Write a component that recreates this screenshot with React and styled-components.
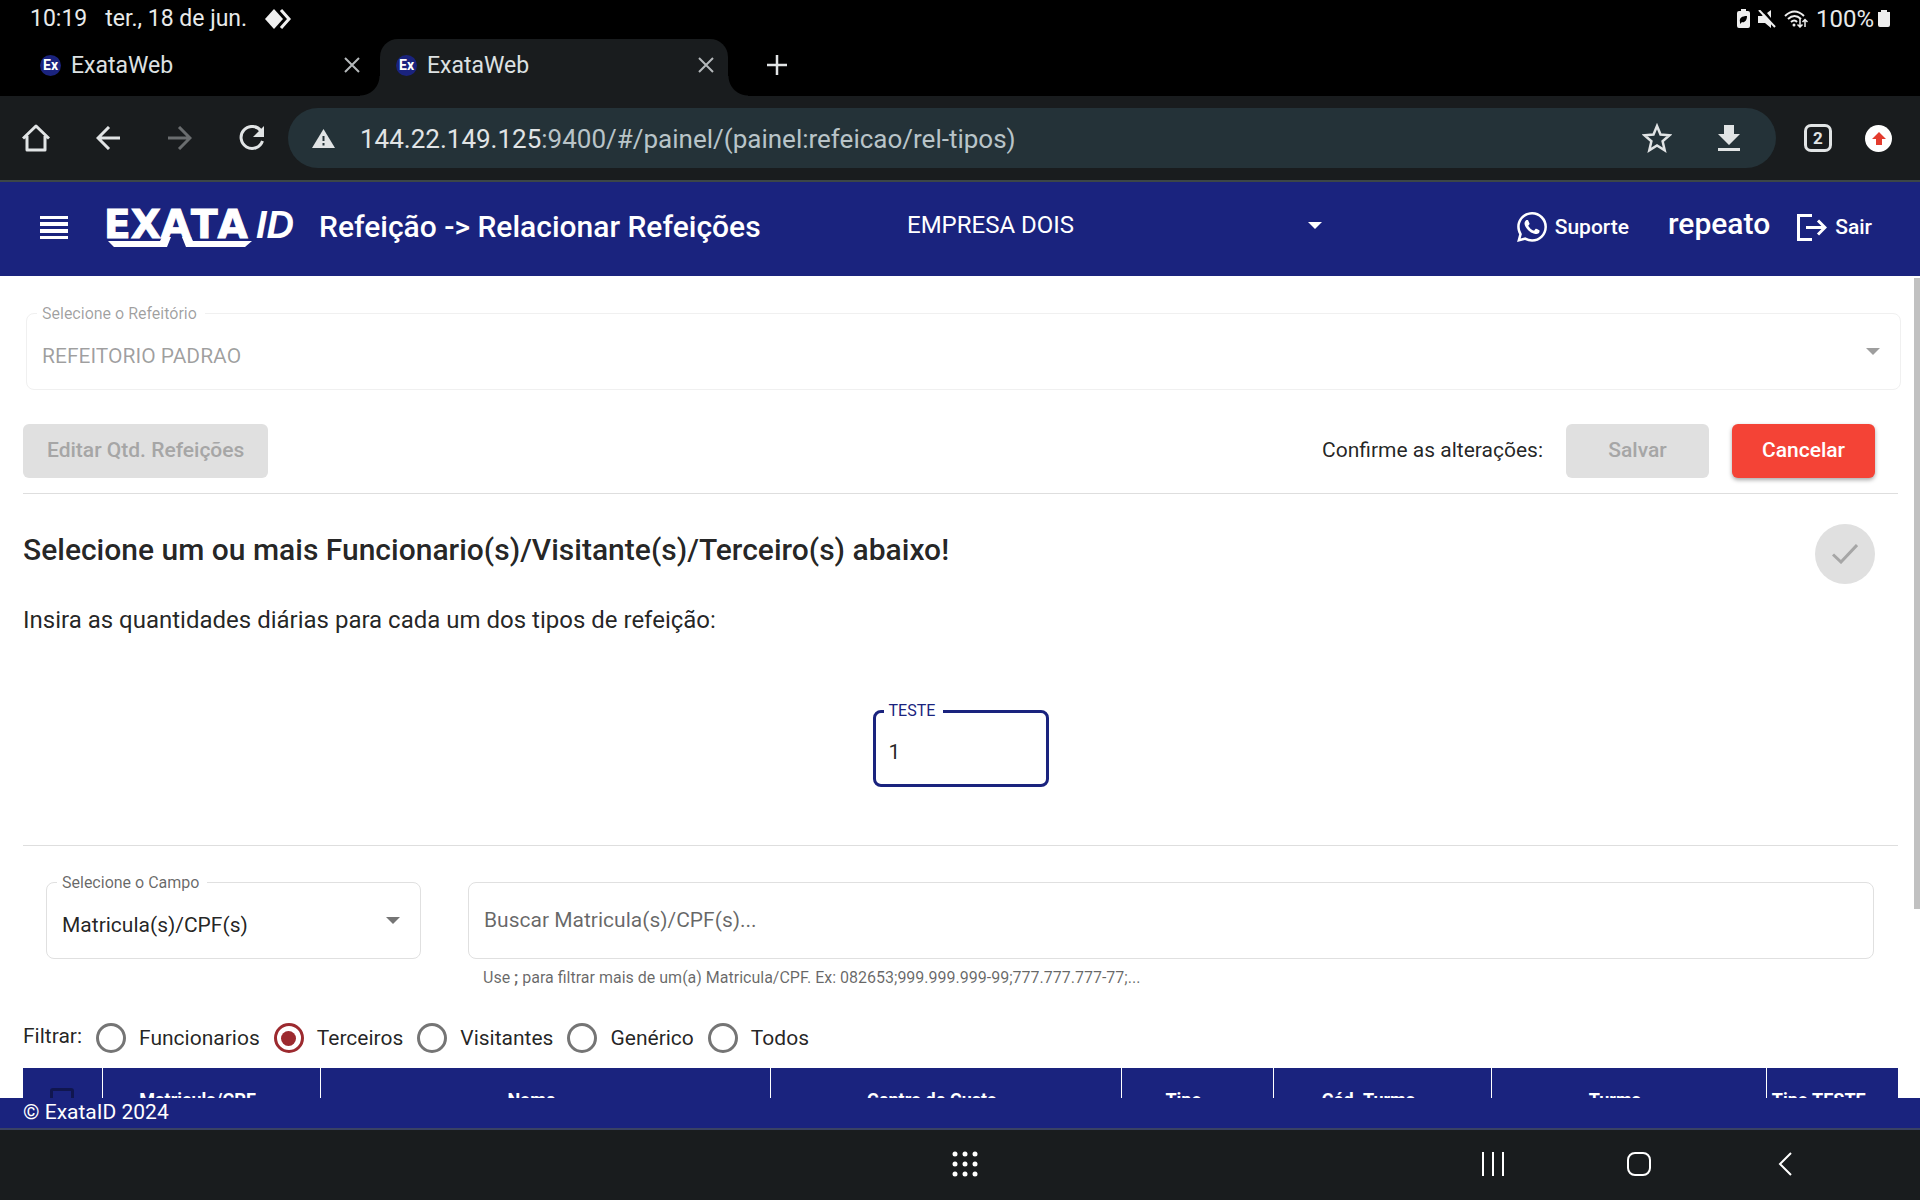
import React, { useState } from "react";
import styled, { createGlobalStyle, css } from "styled-components";

const NAVY = "#1a237e";
const INK = "rgba(0, 0, 0, 0.87)";

const GlobalStyle = createGlobalStyle`
  *, *::before, *::after { box-sizing: border-box; }
  body { margin: 0; font-family: Roboto, "Liberation Sans", sans-serif; color: ${INK}; background: #fff; }
  button, input, select { font: inherit; color: inherit; margin: 0; }
  h1, h2, p { margin: 0; font-weight: 400; }
`;

const Screen = styled.div`
  display: flex;
  flex-direction: column;
  height: 100vh;
  min-height: 600px;
  overflow: hidden;
`;

const Icon = styled.svg`
  display: block;
  flex: none;
  width: ${(p) => p.$w}px;
  height: ${(p) => p.$h || p.$w}px;
`;

const plainButton = css`
  display: flex;
  align-items: center;
  justify-content: center;
  border: 0;
  padding: 0;
  background: none;
`;

/* ---------- Android status bar ---------- */

const StatusBar = styled.div`
  display: flex;
  flex: none;
  align-items: center;
  height: 39px;
  padding: 0 30px 2px;
  background: #000;
  color: #e8eaea;
  font-size: 23px;
  line-height: 36px;
`;
const StatusDate = styled.span`
  margin: 0 18px 0 18px;
`;
const StatusRight = styled.div`
  display: flex;
  align-items: center;
  gap: 8px;
  margin-left: auto;
  font-size: 24px;
`;
const Battery = styled.div`
  display: flex;
  align-items: center;
  gap: 4px;
`;

/* ---------- browser tabs ---------- */

const TabStrip = styled.div`
  display: flex;
  flex: none;
  height: 57px;
  padding-left: 24px;
  background: #000;
`;
const Tab = styled.div`
  position: relative;
  display: flex;
  align-items: center;
  width: ${(p) => (p.$active ? 348 : 356)}px;
  padding: 0 ${(p) => (p.$active ? 10 : 16)}px 5px 16px;
  border-radius: 18px 18px 0 0;
  background: ${(p) => (p.$active ? "#191c1e" : "#000")};
  color: #dde1e2;
  font-size: 23px;

  ${(p) =>
    p.$active &&
    css`
      &::before,
      &::after {
        content: "";
        position: absolute;
        bottom: 0;
        width: 20px;
        height: 20px;
      }
      &::before {
        left: -20px;
        background: radial-gradient(circle at 0 0, #000 19px, #191c1e 20px);
      }
      &::after {
        right: -20px;
        background: radial-gradient(circle at 100% 0, #000 19px, #191c1e 20px);
      }
    `}
`;
const TabTitle = styled.span`
  flex: 1;
  margin-left: 10px;
`;
const Favicon = styled.span`
  display: grid;
  place-items: center;
  width: 21px;
  height: 21px;
  border-radius: 50%;
  background: ${NAVY};
  color: #fff;
  font-size: 14px;
  font-weight: 700;
`;
const IconButton = styled.button`
  ${plainButton}
  flex: none;
  width: ${(p) => p.$w || 24}px;
  height: ${(p) => p.$h || 40}px;
  color: ${(p) => p.$color || "#e1e4e5"};
`;
const NewTab = styled(IconButton)`
  margin: 6px 0 0 37px;
`;

/* ---------- browser toolbar ---------- */

const Toolbar = styled.div`
  display: flex;
  flex: none;
  align-items: center;
  height: 86px;
  padding-right: 28px;
  border-bottom: 2px solid #3c4647;
  background: #191c1e;
`;
const AddressBar = styled.div`
  display: flex;
  flex: 1;
  align-items: center;
  height: 60px;
  padding: 0 24px;
  border-radius: 30px;
  background: #243238;
`;
const Address = styled.p`
  flex: 1;
  margin-left: 25px;
  padding-top: 2px;
  color: #b9c4c8;
  font-size: 26px;
  line-height: 36px;
  white-space: nowrap;
`;
const Host = styled.span`
  color: #e1e4e5;
`;
const TabCount = styled.button`
  ${plainButton}
  width: 28px;
  height: 28px;
  margin: 0 33px 0 28px;
  border: 3px solid #e1e4e5;
  border-radius: 7px;
  color: #e1e4e5;
  font-size: 17px;
  font-weight: 700;
`;
const UpdateButton = styled.button`
  ${plainButton}
  width: 27px;
  height: 27px;
  border-radius: 50%;
  background: #fff;
`;

/* ---------- application header ---------- */

const Header = styled.header`
  display: grid;
  flex: none;
  grid-template-columns: 907px minmax(200px, 415px) 1fr;
  align-items: center;
  height: 94px;
  padding: 0 48px 4px 0;
  background: ${NAVY};
  color: #fff;
`;
const Brand = styled.div`
  display: flex;
  align-items: center;
  padding-left: 39px;
`;
const Logo = styled.svg`
  display: block;
  width: 192px;
  height: 50px;
  margin: 0 20px 0 38px;
  overflow: visible;
  font-kerning: none;
`;
const PageTitle = styled.h1`
  font-size: 30px;
  font-weight: 500;
  line-height: 36px;
`;
const Actions = styled.div`
  display: flex;
  align-items: center;
  justify-content: flex-end;
`;
const ActionLink = styled.a`
  display: flex;
  align-items: center;
  gap: 8px;
  color: inherit;
  font-size: 21px;
  font-weight: 500;
  text-decoration: none;
`;
const UserName = styled.span`
  margin: 0 27px 0 39px;
  padding-bottom: 6px;
  font-size: 30px;
  font-weight: 500;
  line-height: 36px;
`;

/* ---------- form fields ---------- */

const FieldBox = styled.div`
  position: relative;
  display: flex;
  width: ${(p) => p.$width || "100%"};
  height: 77px;
  border: ${(p) => (p.$focused ? `3px solid ${NAVY}` : `1px solid ${p.$disabled ? "#f0f0f0" : "#e0e0e0"}`)};
  border-radius: 8px;
  color: ${(p) => (p.$disabled ? "rgba(0, 0, 0, 0.38)" : INK)};
`;
const FieldLabel = styled.label`
  position: absolute;
  top: ${(p) => (p.$focused ? -12 : -10)}px;
  left: ${(p) => (p.$focused ? 8 : 10)}px;
  padding: 0 8px 0 5px;
  background: #fff;
  color: ${(p) => (p.$focused ? NAVY : p.$disabled ? "rgba(0, 0, 0, 0.38)" : "rgba(0, 0, 0, 0.6)")};
  font-size: 16px;
  line-height: 20px;
`;
const control = css`
  width: 100%;
  border: 0;
  outline: 0;
  background: none;
  appearance: none;
  font-size: 21px;
  opacity: 1;
`;
const FieldInput = styled.input`
  ${control}
  padding: ${(p) => (p.$labelled ? "7px 13px 0" : "0 15px 2px")};

  &::placeholder { color: rgba(0, 0, 0, 0.6); opacity: 1; }
`;
const FieldSelect = styled.select`
  ${control}
  padding: 8px 48px 0 15px;
`;
const CaretBox = styled.span`
  position: absolute;
  top: 34px;
  right: 20px;
  pointer-events: none;
  color: ${(p) => (p.$disabled ? "rgba(0, 0, 0, 0.38)" : "rgba(0, 0, 0, 0.54)")};
`;

const CompanyPicker = styled.div`
  position: relative;
  padding-bottom: 4px;
`;
const CompanySelect = styled.select`
  ${control}
  padding: 0;
  font-size: 24px;
  line-height: 36px;
`;
const CompanyCaret = styled.span`
  position: absolute;
  top: 15px;
  right: 0;
  pointer-events: none;
`;

/* ---------- page ---------- */

const Viewport = styled.div`
  display: flex;
  flex: 1;
  min-height: 0;
`;
const Page = styled.main`
  flex: 1;
  min-width: 0;
  padding: 37px 16px 0 23px;
  overflow: hidden;
`;
const ScrollTrack = styled.div`
  flex: none;
  width: 6px;
  padding-top: 2px;
`;
const ScrollThumb = styled.div`
  height: 77%;
  background: #c1c1c1;
`;
const RefectoryRow = styled.div`
  margin-right: -3px;
  padding-left: 3px;
`;
const Section = styled.section`
  border-bottom: 1px solid #dedede;
`;
const ConfirmBar = styled(Section)`
  display: flex;
  align-items: center;
  gap: 23px;
  padding: 34px 23px 15px 0;
  font-size: 21px;
`;
const ConfirmText = styled.span`
  margin-left: auto;
  padding-bottom: 2px;
`;
const Button = styled.button`
  ${plainButton}
  min-width: 143px;
  height: 54px;
  padding: 0 24px 2px;
  border-radius: 6px;
  background: #e0e0e0;
  color: #a6a6a6;
  font-size: 21px;
  font-weight: 500;

  ${(p) =>
    p.$danger &&
    css`
      background: #f44336;
      color: #fff;
      box-shadow: 0 2px 4px rgba(0, 0, 0, 0.35);
    `}
`;
const Quantities = styled(Section)`
  padding: 30px 0 58px;
`;
const QuantitiesHead = styled.div`
  display: flex;
  align-items: center;
  justify-content: space-between;
  padding-right: 23px;
`;
const Heading = styled.h2`
  padding-bottom: 8px;
  font-size: 30px;
  font-weight: 500;
  line-height: 40px;
`;
const Fab = styled.button`
  ${plainButton}
  width: 60px;
  height: 60px;
  border-radius: 50%;
  background: #e0e0e0;
  color: #a6a6a6;
`;
const Lead = styled.p`
  padding: 20px 0 74px;
  font-size: 24px;
  line-height: 32px;
`;
const Centered = styled.div`
  display: flex;
  justify-content: center;
`;
const Filters = styled.div`
  display: flex;
  gap: 47px;
  padding: 36px 24px 0 23px;
`;
const SearchColumn = styled.div`
  flex: 1;
`;
const Hint = styled.p`
  padding: 9px 15px 0;
  color: rgba(0, 0, 0, 0.6);
  font-size: 16px;
  line-height: 20px;
`;
const RadioRow = styled.fieldset`
  display: flex;
  align-items: center;
  height: 30px;
  margin: 35px 0 15px;
  border: 0;
  padding: 0;
  font-size: 21px;
  line-height: 28px;
`;
const RadioCaption = styled.span`
  margin-right: 14px;
  padding-bottom: 4px;
`;
const RadioLabel = styled.label`
  display: flex;
  align-items: center;
  gap: 13px;
  margin-right: 14px;
`;
const Radio = styled.input`
  display: grid;
  place-items: center;
  width: 30px;
  height: 30px;
  border: 3px solid #757575;
  border-radius: 50%;
  appearance: none;

  &:checked { border-color: #9c2a2f; }
  &:checked::before {
    content: "";
    width: 15px;
    height: 15px;
    border-radius: 50%;
    background: #9c2a2f;
  }
`;
const Table = styled.table`
  width: 100%;
  border-collapse: collapse;
  table-layout: fixed;
  background: ${NAVY};
  color: #fff;
`;
const HeadCell = styled.th`
  width: ${(p) => p.$width};
  height: 84px;
  padding: 0 ${(p) => (p.$check ? 0 : 27)}px 20px 0;
  border-left: 1px solid #fff;
  font-size: 18px;
  font-weight: 700;
  line-height: 24px;
  white-space: nowrap;

  &:first-child { border-left: 0; }
`;
const Check = styled.input`
  display: block;
  width: 24px;
  height: 24px;
  margin: 0 auto;
  border: 3px solid #10164f;
  border-radius: 3px;
  appearance: none;
`;
const Footer = styled.footer`
  flex: none;
  height: 32px;
  padding-left: 23px;
  border-bottom: 2px solid #3a4263;
  background: ${NAVY};
  color: #fff;
  font-size: 21px;
  line-height: 28px;
`;

/* ---------- Android navigation bar ---------- */

const NavBar = styled.nav`
  display: grid;
  flex: none;
  grid-template-columns: 1fr 60px 1fr;
  align-items: center;
  height: 70px;
  padding: 0 0 2px 10px;
  background: #191c1e;
`;
const NavKeys = styled.div`
  display: flex;
  justify-content: flex-end;
  gap: 86px;
  padding-right: 105px;
`;

/* ---------- drawings ---------- */

const Caret = () => (
  <Icon $w={14} $h={7} viewBox="0 0 14 7" aria-hidden="true">
    <path d="M0 0h14L7 7z" fill="currentColor" />
  </Icon>
);
const CloseIcon = () => (
  <Icon $w={16} viewBox="0 0 16 16" stroke="currentColor" strokeWidth="2">
    <path d="M1 1l14 14M15 1L1 15" />
  </Icon>
);

const radios = ["Funcionarios", "Terceiros", "Visitantes", "Genérico", "Todos"];
const columns = [
  ["Matricula/CPF", "218px"],
  ["Nome", "24%"],
  ["Centro de Custo", "351px"],
  ["Tipo", "152px"],
  ["Cód. Turma", "218px"],
  ["Turma", "275px"],
  ["Tipo TESTE", "132px"],
];

function BrowserTab({ active }) {
  return (
    <Tab $active={active}>
      <Favicon>Ex</Favicon>
      <TabTitle>ExataWeb</TabTitle>
      <IconButton aria-label="Fechar guia" $color="#b4b8ba">
        <CloseIcon />
      </IconButton>
    </Tab>
  );
}

function Browser() {
  return (
    <>
      <StatusBar>
        <span>10:19</span>
        <StatusDate>ter., 18 de jun.</StatusDate>
        <Icon $w={28} $h={20} viewBox="0 0 28 20">
          <path d="M9 0l9 10-9 10L0 10z" fill="#f0f0f0" />
          <path d="M16 1l8 9-8 9" fill="none" stroke="#f0f0f0" strokeWidth="3" />
        </Icon>
        <StatusRight>
          <Icon $w={13} $h={19} viewBox="0 0 13 19">
            <path d="M4 0h5v2h2q2 0 2 2v13q0 2-2 2H2q-2 0-2-2V4q0-2 2-2h2z" fill="#eee" />
            <path d="M3 13c-1-4 2-6 7-6 0 5-3 7-5 6l-2 2z" fill="#000" />
          </Icon>
          <Icon $w={18} viewBox="0 0 18 18">
            <path d="M0 6h4l2-2 7 8v6l-6-5H0zM9 3l4-3v8z" fill="#eee" />
            <path d="M1 0l16 17" stroke="#eee" strokeWidth="2" />
          </Icon>
          <Icon $w={24} $h={18} viewBox="0 0 24 18">
            <g fill="none" stroke="#eee" strokeWidth="2">
              <path d="M1 6q9.500-9 19 0M4 9q6.500-6 13 0M7 12q3.500-3 6 0" />
              <path d="M16 9v8M13.500 14.500l2.500 2.500 2.500-2.500M21 17V9.500M18.500 12l2.500-2.500 2.500 2.500" strokeWidth="1.500" />
            </g>
            <circle cx="10" cy="15" r="1.500" fill="#eee" />
          </Icon>
          <Battery>
            100%
            <Icon $w={12} $h={17} viewBox="0 0 12 17">
              <path d="M3 0h6v2h3v13q0 2-2 2H2q-2 0-2-2V2h3z" fill="#eee" />
            </Icon>
          </Battery>
        </StatusRight>
      </StatusBar>
      <TabStrip>
        <BrowserTab />
        <BrowserTab active />
        <NewTab aria-label="Nova guia">
          <Icon $w={20} viewBox="0 0 20 20" stroke="currentColor" strokeWidth="2.500">
            <path d="M10 0v20M0 10h20" />
          </Icon>
        </NewTab>
      </TabStrip>
      <Toolbar>
        <IconButton $w={72} aria-label="Início">
          <Icon $w={28} viewBox="0 0 28 28" fill="none" stroke="currentColor" strokeWidth="3" strokeLinejoin="round">
            <path d="M1 14.500L14 2l13 12.500M5 12v14h18V12" />
          </Icon>
        </IconButton>
        <IconButton $w={72} aria-label="Voltar">
          <Icon $w={24} viewBox="0 0 24 24" fill="none" stroke="currentColor" strokeWidth="3">
            <path d="M24 12H2M13 1L2 12l11 11" />
          </Icon>
        </IconButton>
        <IconButton $w={72} $color="#6a6d6f" aria-label="Avançar">
          <Icon $w={24} viewBox="0 0 24 24" fill="none" stroke="currentColor" strokeWidth="3">
            <path d="M0 12h22M11 1l11 11-11 11" />
          </Icon>
        </IconButton>
        <IconButton $w={72} aria-label="Recarregar">
          <Icon $w={26} viewBox="0 0 26 26" fill="none">
            <path d="M22 6A11 11 0 1 0 23.500 16" stroke="currentColor" strokeWidth="3" />
            <path d="M25 1v11H14z" fill="currentColor" />
          </Icon>
        </IconButton>
        <AddressBar>
          <Icon $w={23} $h={19} viewBox="0 0 23 19">
            <path d="M11.500 0L23 19H0z" fill="#e1e4e5" />
            <path d="M11.500 7v5M11.500 14v2.500" stroke="#243238" strokeWidth="2" />
          </Icon>
          <Address>
            <Host>144.22.149.125</Host>:9400/#/painel/(painel:refeicao/rel-tipos)
          </Address>
          <IconButton $w={98} aria-label="Favoritar">
            <Icon $w={30} viewBox="0 0 30 30" fill="none" stroke="currentColor" strokeWidth="2.500">
              <path d="M15 3l3.500 8.500 9 .8-6.900 6 2.100 9L15 22.500l-7.700 4.800 2.100-9-6.900-6 9-.8z" />
            </Icon>
          </IconButton>
          <IconButton $w={46} aria-label="Baixar">
            <Icon $w={22} $h={26} viewBox="0 0 22 26" fill="currentColor">
              <path d="M6 0h10v9h6L11 20 0 9h6zM0 23h22v3H0z" />
            </Icon>
          </IconButton>
        </AddressBar>
        <TabCount>2</TabCount>
        <UpdateButton aria-label="Atualizar">
          <Icon $w={14} $h={13} viewBox="0 0 14 13">
            <path d="M7 0l7 7h-4v6H4V7H0z" fill="#e33b2e" />
          </Icon>
        </UpdateButton>
      </Toolbar>
    </>
  );
}

function AppHeader() {
  return (
    <Header>
      <Brand>
        <IconButton $w={30} $color="#fff" aria-label="Menu">
          <Icon $w={28} $h={23} viewBox="0 0 28 23" fill="currentColor">
            <path d="M0 0h28v3H0zM0 6h28v4H0zM0 13h28v4H0zM0 20h28v3H0z" />
          </Icon>
        </IconButton>
        <Logo viewBox="0 0 192 50" fill="#fff" role="img" aria-label="EXATA ID">
          <text x="-3" y="36" fontFamily="'DejaVu Sans', sans-serif" fontWeight="700" fontSize="39" stroke="#fff">EXATA</text>
          <text x="149" y="36" fontFamily="'Liberation Sans', sans-serif" fontWeight="700" fontStyle="italic" fontSize="38">ID</text>
          <path d="M1 39h52l2-4h9l-4 10H7zM75 35h9l2 4h59l-7 6H79z" />
        </Logo>
        <PageTitle>{"Refeição -> Relacionar Refeições"}</PageTitle>
      </Brand>
      <CompanyPicker>
        <CompanySelect aria-label="Empresa">
          <option>EMPRESA DOIS</option>
        </CompanySelect>
        <CompanyCaret>
          <Caret />
        </CompanyCaret>
      </CompanyPicker>
      <Actions>
        <ActionLink href="#suporte">
          <Icon $w={30} viewBox="0 0 24 24" fill="currentColor">
            <path d="M17.472 14.382c-.297-.149-1.758-.867-2.030-.967-.273-.099-.471-.148-.670.150-.197.297-.767.966-.940 1.164-.173.199-.347.223-.644.075-.297-.150-1.255-.463-2.390-1.475-.883-.788-1.480-1.761-1.653-2.059-.173-.297-.018-.458.130-.606.134-.133.298-.347.446-.520.149-.174.198-.298.298-.497.099-.198.050-.371-.025-.520-.075-.149-.669-1.612-.916-2.207-.242-.579-.487-.500-.669-.510-.173-.008-.371-.010-.570-.010-.198 0-.520.074-.792.372-.272.297-1.040 1.016-1.040 2.479 0 1.462 1.065 2.875 1.213 3.074.149.198 2.096 3.200 5.077 4.487.709.306 1.262.489 1.694.625.712.227 1.360.195 1.871.118.571-.085 1.758-.719 2.006-1.413.248-.694.248-1.289.173-1.413-.074-.124-.272-.198-.570-.347m-5.421 7.403h-.004a9.870 9.870 0 01-5.031-1.378l-.361-.214-3.741.982.998-3.648-.235-.374a9.860 9.860 0 01-1.510-5.260c.001-5.450 4.436-9.884 9.888-9.884 2.640 0 5.122 1.030 6.988 2.898a9.825 9.825 0 012.893 6.994c-.003 5.450-4.437 9.884-9.885 9.884m8.413-18.297A11.815 11.815 0 0012.050 0C5.495 0 .160 5.335.157 11.892c0 2.096.547 4.142 1.588 5.945L.057 24l6.305-1.654a11.882 11.882 0 005.683 1.448h.005c6.554 0 11.890-5.335 11.893-11.893a11.821 11.821 0 00-3.480-8.413z" />
          </Icon>
          Suporte
        </ActionLink>
        <UserName>repeato</UserName>
        <ActionLink href="#sair">
          <Icon $w={30} $h={27} viewBox="0 0 30 27" fill="none" stroke="currentColor" strokeWidth="3">
            <path d="M15 1.500H1.500v24H15M9 13.500h18M21 6.500l7 7-7 7" />
          </Icon>
          Sair
        </ActionLink>
      </Actions>
    </Header>
  );
}

function SelectField({ id, label, value, width, disabled }) {
  return (
    <FieldBox $width={width} $disabled={disabled}>
      <FieldLabel htmlFor={id} $disabled={disabled}>{label}</FieldLabel>
      <FieldSelect id={id} disabled={disabled}>
        <option>{value}</option>
      </FieldSelect>
      <CaretBox $disabled={disabled}>
        <Caret />
      </CaretBox>
    </FieldBox>
  );
}

export default function App() {
  const [filter, setFilter] = useState("Terceiros");
  const [quantity, setQuantity] = useState("1");
  return (
    <Screen>
      <GlobalStyle />
      <Browser />
      <AppHeader />
      <Viewport>
        <Page>
          <RefectoryRow>
            <SelectField id="refeitorio" label="Selecione o Refeitório" value="REFEITORIO PADRAO" disabled />
          </RefectoryRow>
          <ConfirmBar>
            <Button disabled>Editar Qtd. Refeições</Button>
            <ConfirmText>Confirme as alterações:</ConfirmText>
            <Button disabled>Salvar</Button>
            <Button $danger>Cancelar</Button>
          </ConfirmBar>
          <Quantities>
            <QuantitiesHead>
              <Heading>Selecione um ou mais Funcionario(s)/Visitante(s)/Terceiro(s) abaixo!</Heading>
              <Fab disabled aria-label="Confirmar">
                <Icon $w={26} $h={20} viewBox="0 0 26 20" fill="none" stroke="currentColor" strokeWidth="3">
                  <path d="M1 10.500l8 7.500L25 1" />
                </Icon>
              </Fab>
            </QuantitiesHead>
            <Lead>Insira as quantidades diárias para cada um dos tipos de refeição:</Lead>
            <Centered>
              <FieldBox $width="176px" $focused>
                <FieldLabel htmlFor="teste" $focused>TESTE</FieldLabel>
                <FieldInput id="teste" $labelled value={quantity} onChange={(e) => setQuantity(e.target.value)} />
              </FieldBox>
            </Centered>
          </Quantities>
          <Filters>
            <SelectField id="campo" label="Selecione o Campo" value="Matricula(s)/CPF(s)" width="375px" />
            <SearchColumn>
              <FieldBox>
                <FieldInput aria-label="Buscar" placeholder="Buscar Matricula(s)/CPF(s)..." />
              </FieldBox>
              <Hint>
                Use <b>;</b> para filtrar mais de um(a) Matricula/CPF. Ex: 082653;999.999.999-99;777.777.777-77;...
              </Hint>
            </SearchColumn>
          </Filters>
          <RadioRow>
            <RadioCaption>Filtrar:</RadioCaption>
            {radios.map((name) => (
              <RadioLabel key={name}>
                <Radio type="radio" name="filtro" checked={filter === name} onChange={() => setFilter(name)} />
                {name}
              </RadioLabel>
            ))}
          </RadioRow>
          <Table>
            <thead>
              <tr>
                <HeadCell $width="79px" $check>
                  <Check type="checkbox" aria-label="Selecionar todos" />
                </HeadCell>
                {columns.map(([name, width]) => (
                  <HeadCell key={name} $width={width}>{name}</HeadCell>
                ))}
              </tr>
            </thead>
          </Table>
        </Page>
        <ScrollTrack>
          <ScrollThumb />
        </ScrollTrack>
      </Viewport>
      <Footer>© ExataID 2024</Footer>
      <NavBar>
        <span />
        <IconButton $w={60} $color="#fff" aria-label="Aplicativos">
          <Icon $w={26} viewBox="0 0 26 26" fill="currentColor">
            {[3, 13, 23].map((y) => [3, 13, 23].map((x) => <circle key={`${x}-${y}`} cx={x} cy={y} r="2.500" />))}
          </Icon>
        </IconButton>
        <NavKeys>
          <IconButton $w={60} $color="#fff" aria-label="Recentes">
            <Icon $w={22} $h={24} viewBox="0 0 22 24" fill="currentColor">
              <path d="M0 0h2v24H0zM10 0h2v24h-2zM20 0h2v24h-2z" />
            </Icon>
          </IconButton>
          <IconButton $w={60} $color="#fff" aria-label="Início">
            <Icon $w={24} viewBox="0 0 24 24" fill="none" stroke="currentColor" strokeWidth="2">
              <rect x="1" y="1" width="22" height="22" rx="7" />
            </Icon>
          </IconButton>
          <IconButton $w={60} $color="#fff" aria-label="Voltar">
            <Icon $w={14} $h={24} viewBox="0 0 14 24" fill="none" stroke="currentColor" strokeWidth="2">
              <path d="M13 1L2 12l11 11" />
            </Icon>
          </IconButton>
        </NavKeys>
      </NavBar>
    </Screen>
  );
}
